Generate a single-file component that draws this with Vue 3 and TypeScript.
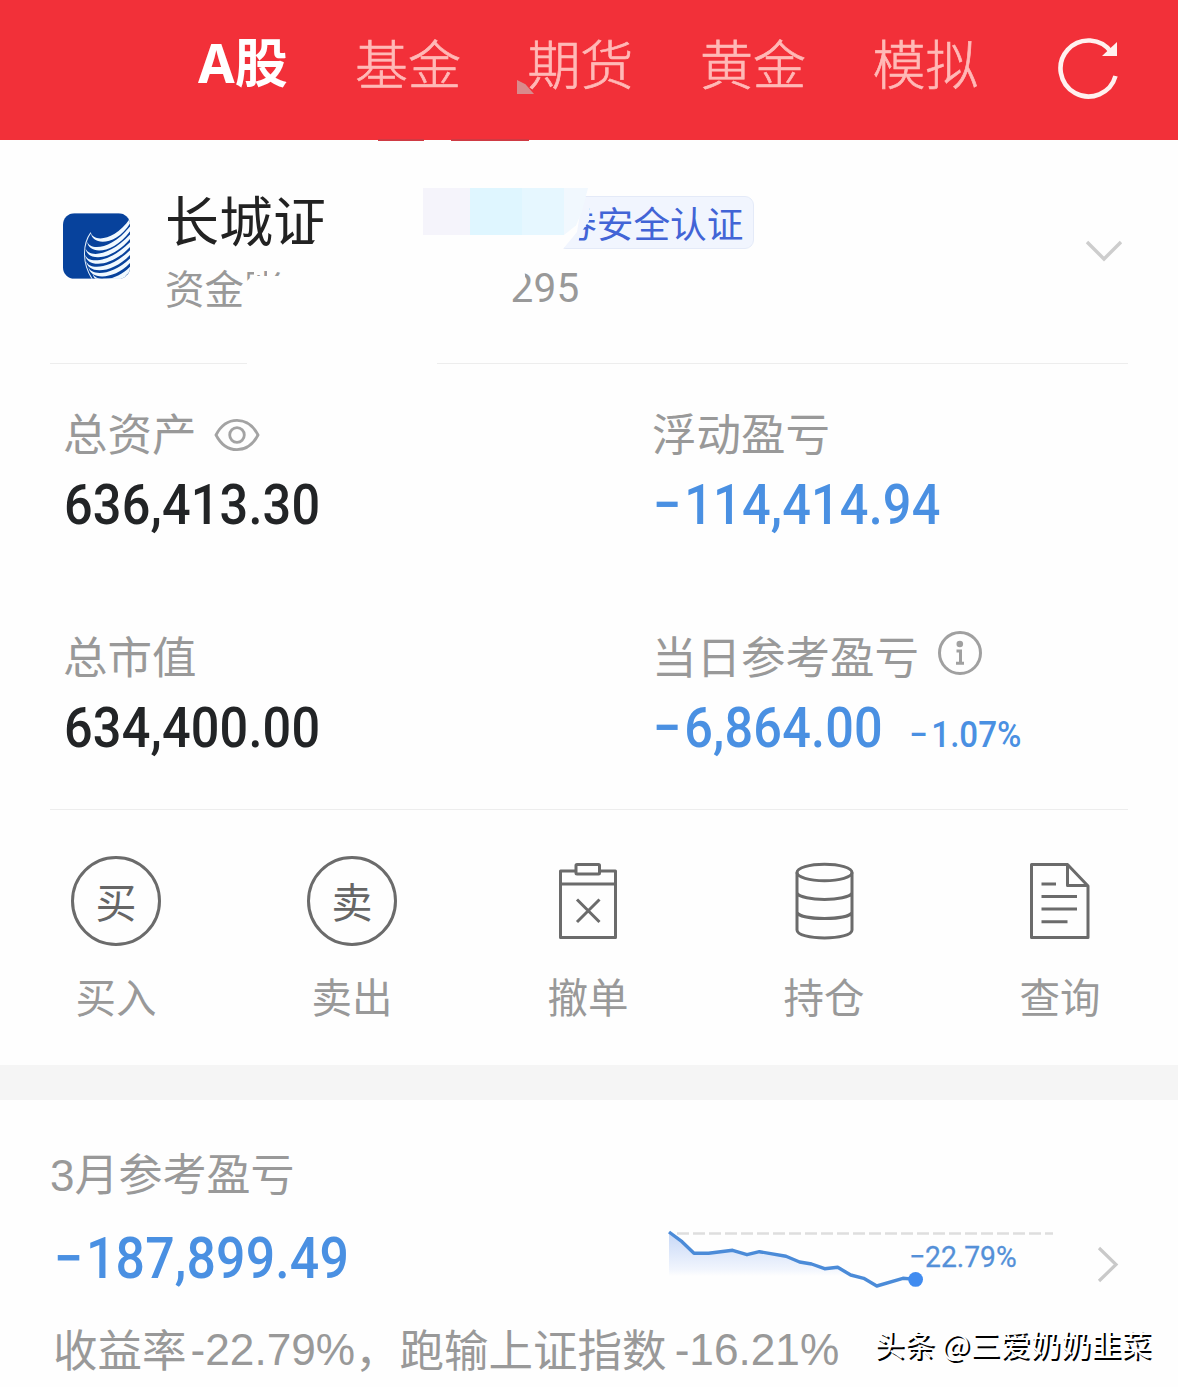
<script setup lang="ts">
interface Holding {
  label: string
  value: string
  rate?: string
  loss?: boolean
  icon?: 'eye' | 'info'
}

const tabs: string[] = ['A股', '基金', '期货', '黄金', '模拟']

const holdings: Holding[] = [
  { label: '总资产', value: '636,413.30', icon: 'eye' },
  { label: '浮动盈亏', value: '114,414.94', loss: true },
  { label: '总市值', value: '634,400.00' },
  { label: '当日参考盈亏', value: '6,864.00', rate: '1.07%', loss: true, icon: 'info' },
]

const actions = [
  { key: 'buy', label: '买入' },
  { key: 'sell', label: '卖出' },
  { key: 'cancel', label: '撤单' },
  { key: 'position', label: '持仓' },
  { key: 'query', label: '查询' },
]

// Each blade of the logo tapers from a tip on the left to the tile's right edge: [tip x, tip y, edge y].
const blades = [
  [83, 58, 14],
  [72, 84, 39],
  [67, 104, 64],
  [66, 123, 88],
  [69, 142, 112],
  [76, 160, 136],
  [88, 178, 160],
].map(
  ([x, y, e]) =>
    `M${x} ${y}C${x + 8} ${y + 30} ${x + 76} ${y + 26} 206 ${e - 7}V${e + 6}C${x + 82} ${y + 40} ${x + 4} ${y + 42} ${x} ${y}Z`,
)

const trend =
  '1,2 14,11.7 26,23.3 40.6,23.3 64.6,20.3 79,24.7 91.4,21.7 118,26.3 131.6,32 143.6,34 156.6,38.7 169.7,37.3 182.7,45 195.7,48.3 208.8,56 234.9,48.3 247.6,49.4'
</script>

<template>
  <div class="page">
    <header class="top">
      <nav class="tabs">
        <span v-for="(t, i) in tabs" :key="t" class="tab" :class="{ active: i === 0 }">{{ t }}</span>
      </nav>
      <svg class="refresh" width="66" height="66" viewBox="0 0 66 66">
        <path d="M55.500 18.500A28 28 0 1 0 59.500 42" fill="none" stroke="#fff1ef" stroke-width="4.600" />
        <path d="M61 8V22H46Z" fill="#fff1ef" />
      </svg>
      <i class="speck"></i>
      <i class="edge edge-a"></i>
      <i class="edge edge-b"></i>
    </header>

    <section class="account">
      <svg class="logo" width="67" height="66" viewBox="0 0 200 196">
        <defs><clipPath id="tile"><rect width="200" height="196" rx="34" /></clipPath></defs>
        <g clip-path="url(#tile)">
          <rect width="200" height="196" fill="#07429c" />
          <path v-for="b in blades" :key="b" :d="b" fill="#f0f9ff" />
          <path d="M83 58C58 92 56 150 88 198" fill="none" stroke="#e4f0fb" stroke-width="3" />
          <path d="M120 196Q170 196 206 178V200H120Z" fill="#f0f9ff" />
        </g>
      </svg>
      <div class="who">
        <div class="broker">长城证</div>
        <div class="fund"><span>资金</span><span class="cut">账</span><span class="tail">295</span></div>
      </div>
      <div class="cert"><span>券安全认证</span></div>
      <div class="patches"><i></i><i></i><i></i><i></i></div>
      <svg class="down" width="38" height="24" viewBox="0 0 38 24">
        <path d="M2 3L19 20L36 3" fill="none" stroke="#cdcdcd" stroke-width="3.4" />
      </svg>
    </section>
    <div class="rule split"><i></i><i></i></div>

    <section class="grid">
      <div v-for="h in holdings" :key="h.label" class="cell">
        <div class="label">
          <span>{{ h.label }}</span>
          <svg v-if="h.icon === 'eye'" class="eye" width="46" height="34" viewBox="0 0 46 34">
            <g fill="none" stroke="#a3a3a3" stroke-width="2.8">
              <path d="M2 17C12-2.500 34-2.500 44 17C34 36.500 12 36.500 2 17Z" />
              <circle cx="23" cy="17" r="7.300" />
            </g>
          </svg>
          <svg v-if="h.icon === 'info'" class="info" width="46" height="46" viewBox="0 0 46 46">
            <circle cx="23" cy="23" r="20.500" fill="none" stroke="#a0a0a0" stroke-width="3" />
            <circle cx="22.800" cy="14" r="3.300" fill="#a0a0a0" />
            <path d="M19.500 21H23.500V33.300M19 33.300H27" fill="none" stroke="#a0a0a0" stroke-width="3" />
          </svg>
        </div>
        <div class="value" :class="{ loss: h.loss }">
          <span class="din"><b v-if="h.loss">−</b>{{ h.value }}</span><small v-if="h.rate"><b>−</b>{{ h.rate }}</small>
        </div>
      </div>
    </section>
    <div class="rule"><i></i></div>

    <section class="actions">
      <div v-for="a in actions" :key="a.key" class="action">
        <span v-if="a.key === 'buy' || a.key === 'sell'" class="ring">{{ a.label[0] }}</span>
        <svg v-else width="90" height="90" viewBox="0 0 90 90" fill="none" stroke="#6b6b6b" stroke-width="3" stroke-linejoin="round">
          <template v-if="a.key === 'cancel'">
            <path d="M32.500 15H17.500V81.500H72.500V15H57" />
            <rect x="33" y="8.500" width="23.500" height="9.500" rx="1" />
            <path d="M17.500 28H72.500M34 43.500L56.500 66M56.500 43.500L34 66" />
          </template>
          <template v-else-if="a.key === 'position'">
            <ellipse cx="45.500" cy="16.500" rx="27.500" ry="8.300" />
            <path d="M18 16.500V74C18 84.500 73 84.500 73 74V16.500M18 37C22 45.500 69 45.500 73 37M18 56.500C22 64.500 69 64.500 73 56.500" />
          </template>
          <template v-else>
            <path d="M52.500 8.500H16.500V81.500H73V30L52.500 8.500V29.500H73" />
            <path d="M26.500 28H41M26.500 40.500H62M26.500 53H62M26.500 65.700H52.500" />
          </template>
        </svg>
        <span class="name">{{ a.label }}</span>
      </div>
    </section>

    <div class="band"></div>

    <section class="month">
      <div class="title">3月参考盈亏</div>
      <div class="row">
        <div class="total"><span class="din"><b>−</b>187,899.49</span></div>
        <div class="chart">
          <svg width="388" height="64" viewBox="0 0 388 64">
            <defs>
              <linearGradient id="fade" x1="0" y1="0" x2="0" y2="1">
                <stop offset="0" stop-color="#c6d7f6" />
                <stop offset="0.850" stop-color="#f1f5fd" />
                <stop offset="1" stop-color="#fefefe" />
              </linearGradient>
            </defs>
            <path d="M1 2L14 11.700L26 23.300H40.600L64.600 20.300L79 24.700L91.400 21.700L118 26.300L131.600 32L143.600 34L156.600 38.700L169.700 37.300L182.700 46H1Z" fill="url(#fade)" />
            <path d="M9 3.500H385" stroke="#dedede" stroke-width="2.400" stroke-dasharray="12 4" />
            <polyline :points="trend" fill="none" stroke="#4b8bd8" stroke-width="3.400" stroke-linejoin="round" />
            <circle cx="247.600" cy="49.400" r="7.400" fill="#418cf0" />
          </svg>
          <span class="pct">−22.79%</span>
        </div>
        <svg class="right" width="24" height="38" viewBox="0 0 24 38">
          <path d="M3 3L20 19.500L3 36" fill="none" stroke="#c9c9c9" stroke-width="3.200" />
        </svg>
      </div>
      <div class="foot">
        <div class="summary">
          <span>收益率</span><span class="num first">-22.79%</span><span>，跑输上证指数</span><span class="num second">-16.21%</span>
        </div>
        <div class="mark">头条 @三爱奶奶韭菜</div>
      </div>
    </section>
  </div>
</template>

<style>
body {
  margin: 0;
  background: #fefefe;
}
</style>

<style scoped>
.page {
  width: 1178px;
  height: 1387px;
  overflow: hidden;
  background: #fefefe;
  font-family: 'Noto Sans CJK SC', sans-serif;
  color: #999;
  white-space: nowrap;
}
svg {
  display: block;
  flex: none;
}
.top {
  position: relative;
  box-sizing: border-box;
  height: 140px;
  padding-left: 198px;
  background: #f23039;
  display: flex;
}
.tabs {
  display: flex;
  gap: 66.5px;
  height: 124px;
  line-height: 124px;
}
.tab {
  font-size: 53px;
  font-weight: 300;
  color: #ffb9b7;
  -webkit-text-stroke: 0.7px #ffb9b7;
}
.tab.active {
  font-family: 'Noto Sans', 'Noto Sans CJK SC', sans-serif;
  font-weight: 700;
  color: #fff;
  width: 90.5px;
  line-height: 126px;
  -webkit-text-stroke: 0;
}
.refresh {
  margin: 34px 0 0 77px;
}
.speck {
  position: absolute;
  left: 517px;
  top: 80px;
  width: 17px;
  height: 14px;
  background: #d98a8c;
  clip-path: polygon(0 0, 50% 30%, 100% 100%, 0 100%);
}
.edge {
  position: absolute;
  top: 139px;
  height: 2px;
  background: #cf3a43;
}
.edge-a {
  left: 378px;
  width: 46px;
}
.edge-b {
  left: 451px;
  width: 78px;
}
.account {
  position: relative;
  height: 223px;
  display: flex;
}
.logo {
  margin: 73px 0 0 63px;
}
.who {
  margin: 39px 0 0 35px;
  width: 398px;
}
.broker {
  height: 78px;
  line-height: 79px;
  font-size: 54px;
  color: #222;
  clip-path: polygon(0 0, 100% 0, 161px 44px, 139px 100%, 0 100%);
  width: 162px;
}
.fund {
  height: 60px;
  line-height: 60px;
  font-size: 39.5px;
  display: flex;
}
.cut {
  clip-path: polygon(0 0, 10px 0, 10px 18px, 17px 18px, 17px 0, 23px 0, 23px 19px, 28px 19px, 28px 0, 100% 0, 100% 19px, 8px 19px, 0 27px);
}
.tail {
  font-family: Roboto, sans-serif;
  font-size: 40.5px;
  margin-left: 227px;
  letter-spacing: 0.2px;
  padding-top: 1px;
  clip-path: polygon(13px 0, 100% 0, 100% 100%, 0 100%, 0 36px, 15px 25px);
}
.cert {
  box-sizing: border-box;
  margin-top: 56px;
  margin-left: -6px;
  width: 197px;
  height: 53px;
  line-height: 50px;
  padding-left: 2px;
  border: 1px solid #e4eaf8;
  border-radius: 9px;
  background: #f1f5fe;
  color: #4264d6;
  font-size: 36.7px;
  clip-path: polygon(26px 0, 100% 0, 100% 100%, 6px 100%, 20px 36px);
}
.cert span {
  display: block;
  clip-path: polygon(30px 0, 100% 0, 100% 100%, 16px 100%, 22px 34px, 29px 24px);
}
.patches {
  position: absolute;
  left: 423px;
  top: 48px;
  display: flex;
  height: 47px;
}
.patches i:nth-child(1) {
  width: 47px;
  background: #f5f4fb;
}
.patches i:nth-child(2) {
  width: 52px;
  background: #dff6ff;
}
.patches i:nth-child(3) {
  width: 42px;
  background: #e6f7ff;
}
.patches i:nth-child(4) {
  width: 24px;
  background: #f1f8fe;
  clip-path: polygon(0 0, 100% 0, 75% 50%, 50% 80%, 0 100%);
}
.down {
  margin: 99px 0 0 331px;
}
.rule {
  display: flex;
  height: 1px;
  margin: 0 50px;
}
.rule i {
  flex: 1;
  background: #ededed;
}
.split {
  justify-content: space-between;
}
.split i {
  flex: none;
  width: 197px;
}
.split i:last-child {
  width: 691px;
}
.grid {
  display: grid;
  grid-template-columns: 589px 1fr;
  grid-auto-rows: 222.5px;
  padding-left: 63px;
}
.cell {
  padding-top: 38px;
}
.label {
  display: flex;
  align-items: center;
  height: 60px;
  line-height: 60px;
  font-size: 44.5px;
}
.eye {
  margin: 5px 0 0 17px;
}
.info {
  margin: 0 0 3px 18px;
}
.value {
  margin-top: 13px;
  height: 60px;
  line-height: 60px;
  font-family: Roboto, sans-serif;
  font-weight: 500;
  font-size: 56px;
  color: #222426;
  padding-left: 1px;
}
.value.loss {
  color: #4a90e2;
}
.din {
  display: inline-block;
  letter-spacing: 0.2px;
  transform: scaleX(0.9);
  transform-origin: 0 50%;
}
.din b {
  font-weight: 500;
  margin-right: 3px;
}
.value small {
  display: inline-block;
  font-size: 36px;
  margin-left: 1px;
  transform: scaleX(0.92);
  transform-origin: 0 50%;
}
.value small b {
  font-weight: 500;
  margin-right: 4px;
}
.actions {
  display: grid;
  grid-template-columns: repeat(5, 236px);
  margin-left: -2px;
  height: 255px;
}
.action {
  display: flex;
  flex-direction: column;
  align-items: center;
  padding-top: 46px;
}
.ring {
  box-sizing: border-box;
  width: 90px;
  height: 90px;
  border: 3px solid #6b6b6b;
  border-radius: 50%;
  text-align: center;
  line-height: 83px;
  font-size: 41px;
  color: #666;
}
.name {
  margin-top: 20px;
  line-height: 60px;
  font-size: 40.5px;
}
.band {
  height: 35px;
  background: #f5f5f5;
}
.month {
  padding: 45px 0 0 50px;
}
.title {
  height: 60px;
  line-height: 61px;
  font-size: 44px;
  font-family: 'Liberation Sans', 'Noto Sans CJK SC', sans-serif;
}
.row {
  display: flex;
  height: 86px;
  margin-top: -4px;
}
.total {
  width: 618px;
  line-height: 116px;
  font-family: Roboto, sans-serif;
  font-weight: 500;
  font-size: 57.5px;
  color: #4a90e2;
  padding-left: 4px;
  box-sizing: border-box;
}
.chart {
  position: relative;
  width: 388px;
  padding-top: 29px;
}
.pct {
  position: absolute;
  left: 241px;
  top: 39px;
  line-height: 34px;
  font-family: Roboto, sans-serif;
  font-size: 30px;
  color: #5490d8;
  -webkit-text-stroke: 0.3px #5490d8;
  transform: scaleX(0.94);
  transform-origin: 0 50%;
}
.right {
  margin: 44px 0 0 40px;
}
.foot {
  position: relative;
  display: flex;
  padding-left: 3px;
}
.summary {
  display: flex;
  height: 122px;
  line-height: 122px;
  font-size: 44.5px;
}
.num {
  font-family: 'Liberation Sans', sans-serif;
  font-size: 44.2px;
  padding-top: 2px;
}
.first {
  margin-left: 4px;
}
.second {
  margin-left: 8px;
}
.mark {
  margin-left: 35px;
  line-height: 112px;
  font-size: 30px;
  letter-spacing: 0.2px;
  color: #fff;
  text-shadow: 2px 2px 0 #000;
}
</style>
